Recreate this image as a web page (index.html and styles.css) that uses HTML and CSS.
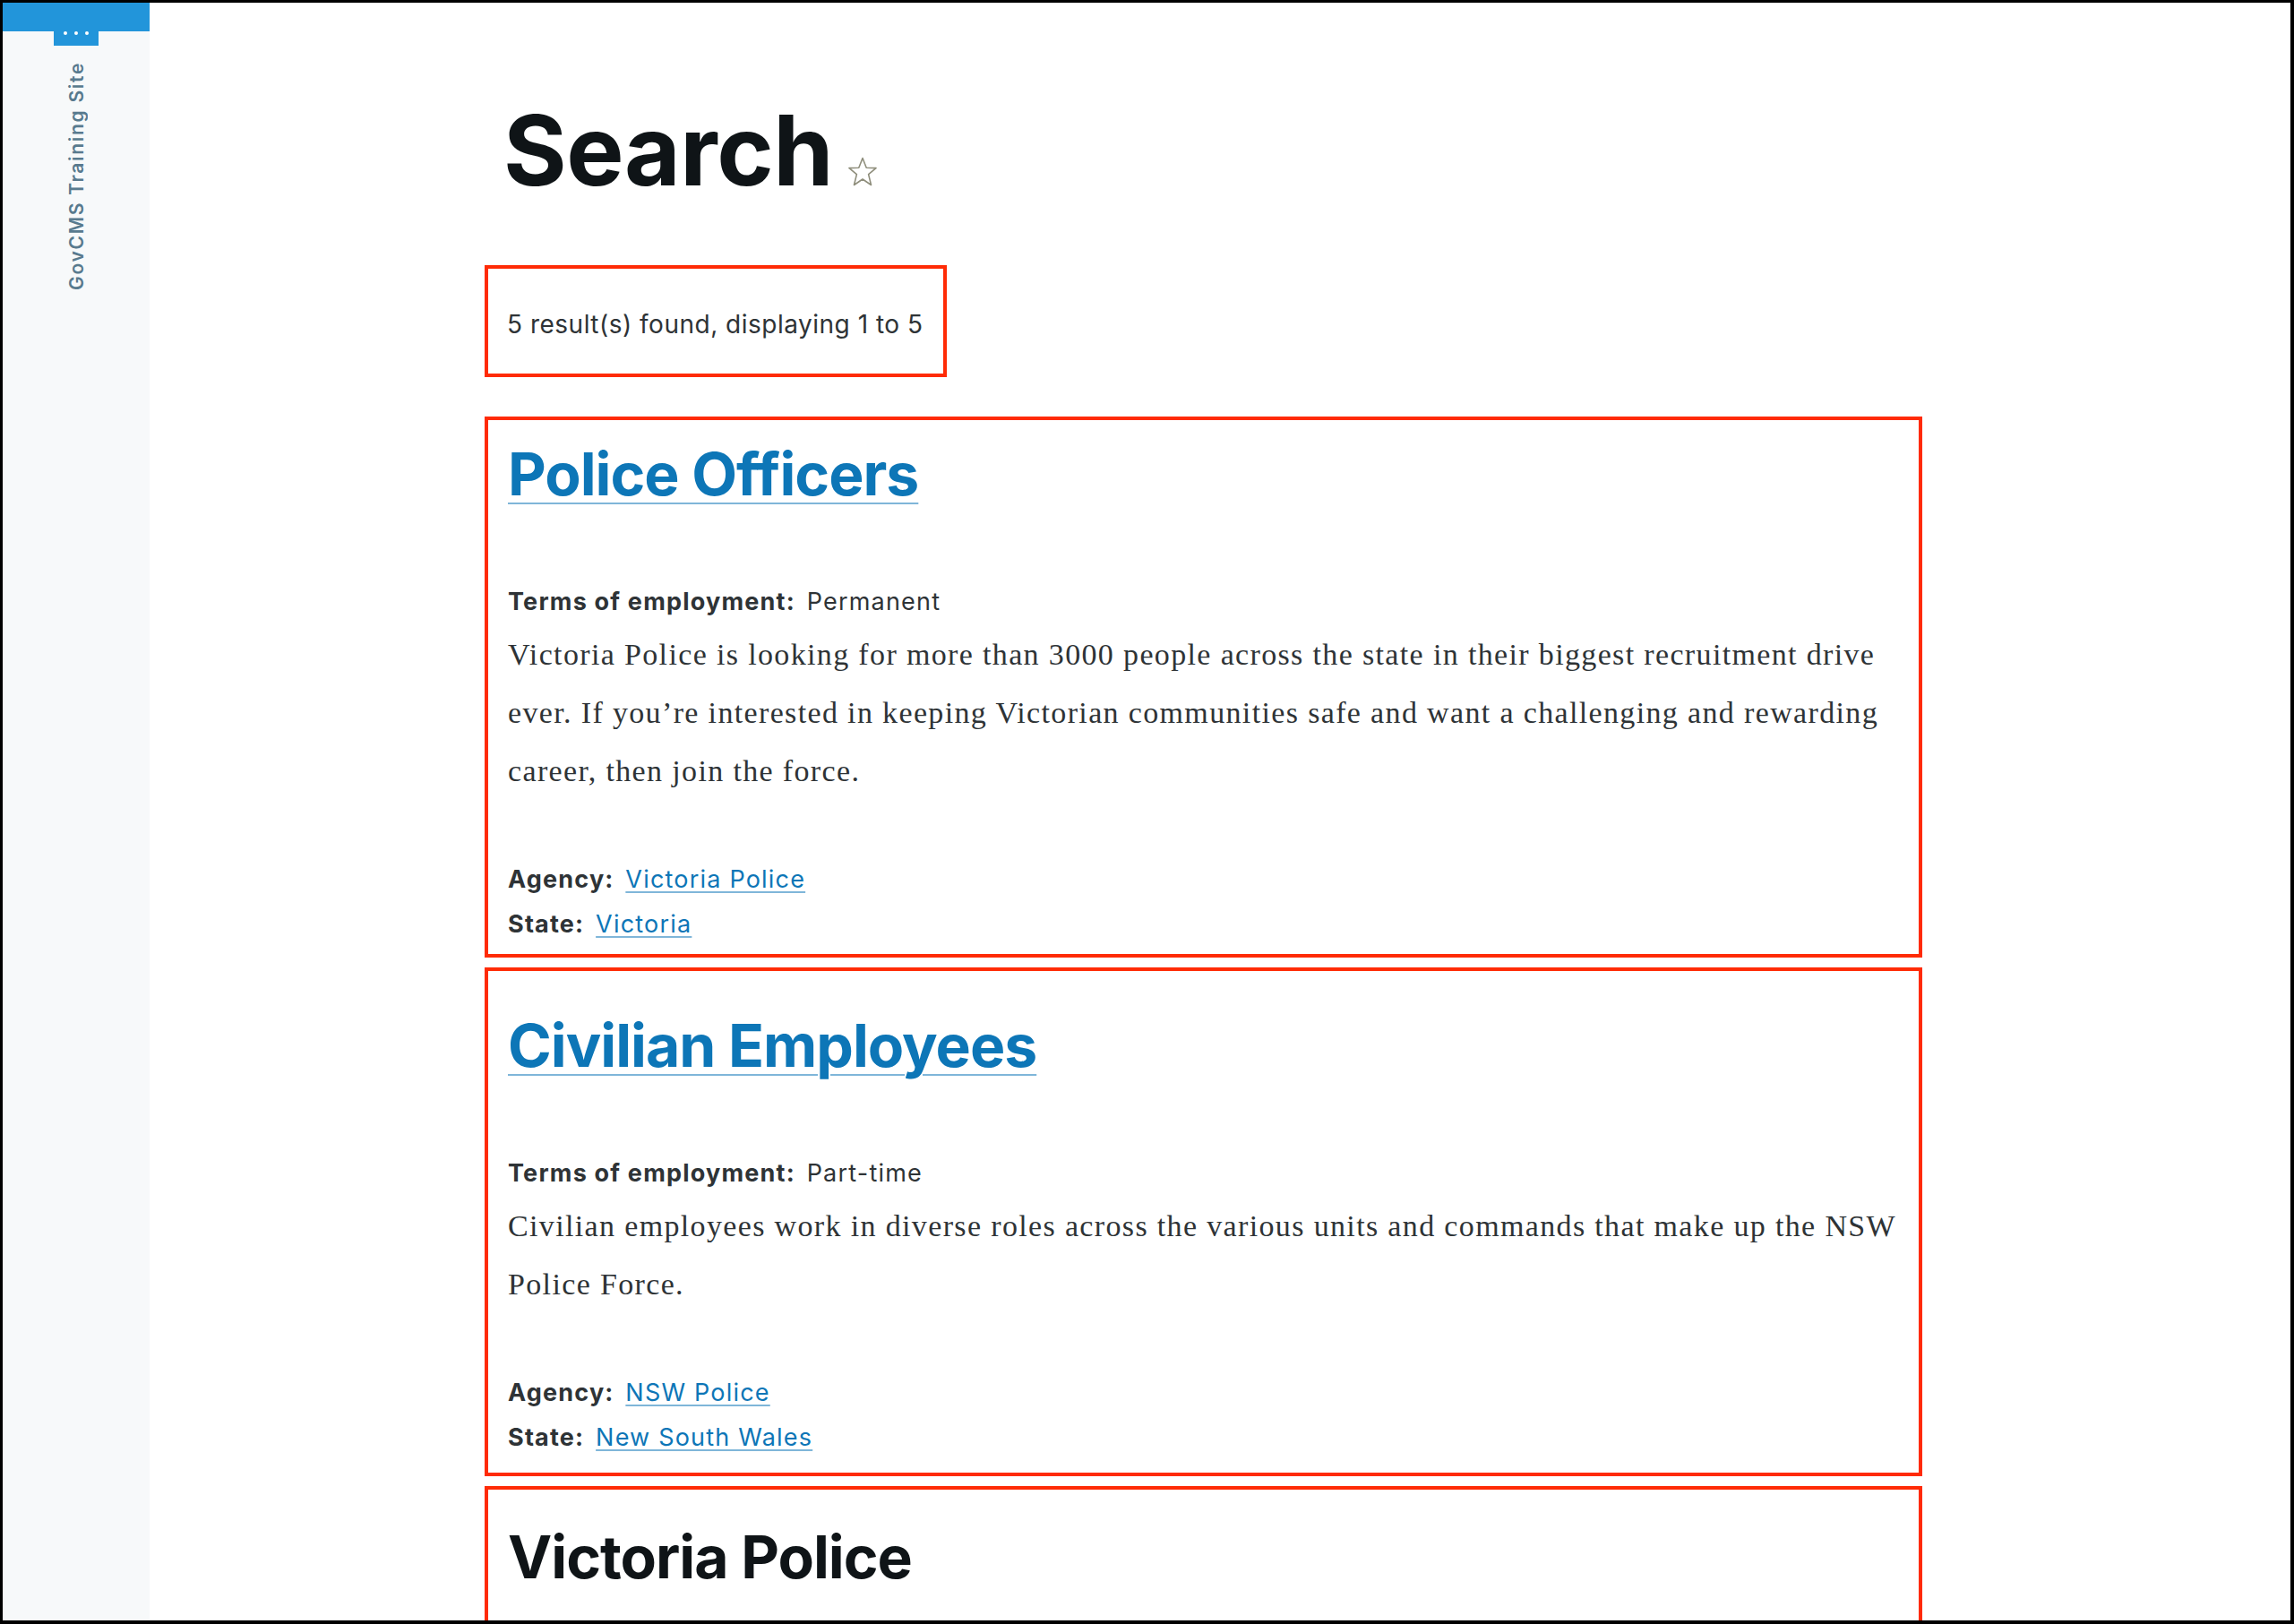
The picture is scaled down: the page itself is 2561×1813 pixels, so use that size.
FILE: index.html
```html
<!DOCTYPE html>
<html lang="en">
<head>
<meta charset="utf-8">
<title>Search | GovCMS Training Site</title>
<link rel="stylesheet" href="styles.css">
</head>
<body>
<div class="frame">
  <aside class="sidebar">
    <div class="sidebar-bar"></div>
    <div class="sidebar-tab"><span class="dot"></span><span class="dot"></span><span class="dot"></span></div>
    <div class="sidebar-label">GovCMS Training Site</div>
  </aside>
  <main class="main">
    <h1 class="page-title">Search<svg class="star" viewBox="0 0 32 34" width="32" height="34" aria-hidden="true"><polygon points="16,1.5 20.2,12.2 31,12.6 22.6,19.6 25.5,31.5 16,25 6.5,31.5 9.4,19.6 1,12.6 11.8,12.2" fill="none" stroke="#8f8e7c" stroke-width="1.6" stroke-linejoin="round"/></svg></h1>
    <div class="summary">5 result(s) found, displaying 1 to 5</div>
    <div class="results">
      <article class="result result--one">
        <h2 class="result-title"><a href="#">Police Officers</a></h2>
        <div class="field"><span class="label">Terms of employment:</span> <span class="value">Permanent</span></div>
        <p class="body">Victoria Police is looking for more than 3000 people across the state in their biggest recruitment drive ever. If you’re interested in keeping Victorian communities safe and want a challenging and rewarding career, then join the force.</p>
        <div class="meta">
          <div class="field field--meta"><span class="label">Agency:</span> <a href="#">Victoria Police</a></div>
          <div class="field field--meta"><span class="label">State:</span> <a href="#">Victoria</a></div>
        </div>
      </article>
      <article class="result result--two">
        <h2 class="result-title"><a href="#">Civilian Employees</a></h2>
        <div class="field"><span class="label">Terms of employment:</span> <span class="value">Part-time</span></div>
        <p class="body">Civilian employees work in diverse roles across the various units and commands that make up the NSW Police Force.</p>
        <div class="meta">
          <div class="field field--meta"><span class="label">Agency:</span> <a href="#">NSW Police</a></div>
          <div class="field field--meta"><span class="label">State:</span> <a href="#">New South Wales</a></div>
        </div>
      </article>
      <article class="result result--three">
        <h2 class="result-title result-title--plain">Victoria Police</h2>
      </article>
    </div>
  </main>
</div>
</body>
</html>
```
FILE: styles.css
```css
html, body {
  margin: 0;
  padding: 0;
  background: #000;
}

.frame {
  box-sizing: border-box;
  width: 2561px;
  height: 1813px;
  border-style: solid;
  border-color: #000;
  border-width: 3px 4px 4px 3px;
  display: flex;
  overflow: hidden;
  background: #fff;
  font-family: Inter, "Noto Sans", sans-serif;
}

/* Sidebar */
.sidebar {
  width: 164px;
  flex: 0 0 164px;
  background: #f7f9fa;
  display: flex;
  flex-direction: column;
  align-items: center;
}

.sidebar-bar {
  align-self: stretch;
  height: 32px;
  background: #2295da;
}

.sidebar-tab {
  width: 50px;
  height: 16px;
  background: #2295da;
  display: flex;
  justify-content: center;
  align-items: flex-start;
  gap: 8px;
}

.dot {
  width: 4px;
  height: 4px;
  border-radius: 50%;
  background: #fff;
  margin-top: 0;
}

.sidebar-label {
  margin-top: 18px;
  writing-mode: vertical-rl;
  transform: rotate(180deg);
  font-size: 21px;
  font-weight: 600;
  letter-spacing: 1.7px;
  color: #587a8e;
  line-height: 1;
}

/* Main */
.main {
  flex: 1;
  padding-left: 374px;
  display: flex;
  flex-direction: column;
  align-items: flex-start;
}

.page-title {
  margin: 100px 0 0;
  padding-left: 21px;
  font-size: 108px;
  font-weight: 700;
  line-height: 1.2;
  color: #0f1417;
  letter-spacing: -0.5px;
  display: flex;
  align-items: baseline;
}

.star {
  margin-left: 17px;
  align-self: flex-end;
  margin-bottom: 24px;
}

.summary {
  box-sizing: border-box;
  width: 516px;
  margin-top: 63px;
  border: 4px solid #ff2b06;
  padding: 42px 12px 35px 21px;
  font-size: 28px;
  line-height: 40px;
  letter-spacing: 0.5px;
  color: #2e3336;
  white-space: nowrap;
}

.results {
  margin-top: 44px;
  width: 1605px;
  display: flex;
  flex-direction: column;
  gap: 11px;
}

.result {
  box-sizing: border-box;
  border: 4px solid #ff2b06;
  padding: 21px 0 8px 22px;
}

.result--two {
  padding-top: 44px;
  padding-bottom: 14px;
}

.result--three {
  padding-top: 36px;
  padding-bottom: 40px;
}

.result-title {
  margin: 0 0 83px;
  font-size: 66px;
  font-weight: 700;
  line-height: 1.2;
  letter-spacing: -1px;
}

.result-title a {
  color: #0d76b7;
  text-decoration: underline;
  text-decoration-color: #7fb6d9;
  text-decoration-thickness: 2px;
  text-underline-offset: 8px;
}

.result-title--plain {
  color: #0f1417;
}

.field {
  font-size: 27px;
  line-height: 40px;
  letter-spacing: 1.2px;
  color: #2e3336;
}

.label {
  font-weight: 700;
  color: #2e3336;
}

.value {
  margin-left: 4px;
}

.body {
  margin: 6px 0 0;
  font-family: "Liberation Serif", "DejaVu Serif", serif;
  font-size: 34px;
  line-height: 65px;
  letter-spacing: 1.35px;
  color: #2e3336;
}

.meta {
  margin-top: 64px;
}

.field--meta {
  line-height: 50px;
}

.field--meta a {
  margin-left: 4px;
  color: #0d76b7;
  text-decoration: underline;
  text-decoration-color: #7fb6d9;
  text-decoration-thickness: 2px;
  text-underline-offset: 4px;
}
```
